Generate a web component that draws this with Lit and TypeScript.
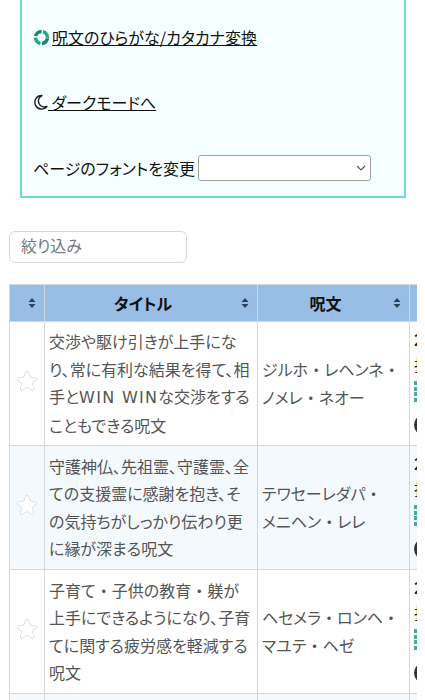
import { LitElement, html, css } from "lit";
import { customElement } from "lit/decorators.js";

const rows = [
  { title: "交渉や駆け引きが上手になり、常に有利な結果を得て、相手とWIN WINな交渉をすることもできる呪文", spell: "ジルホ・レヘンネ・ノメレ・ネオー" },
  { title: "守護神仏、先祖霊、守護霊、全ての支援霊に感謝を抱き、その気持ちがしっかり伝わり更に縁が深まる呪文", spell: "テワセーレダパ・メニヘン・レレ" },
  { title: "子育て・子供の教育・躾が上手にできるようになり、子育てに関する疲労感を軽減する呪文", spell: "ヘセメラ・ロンヘ・マユテ・ヘゼ" },
  { title: "", spell: "" },
];

const sortIcon = html`<svg class="sort" viewBox="0 0 8 10"><path d="M4 0 7.500 4H.5zM4 10 .5 6h7z"></path></svg>`;

const starPath = "M12 3.500l2.700 5.600 6.100.8-4.500 4.200 1.200 6.100-5.500-3-5.500 3 1.200-6.100-4.500-4.200 6.100-.8z";

// middle dots stay full width and latin runs are spaced wider, as in the reference
const cellText = (text: string) =>
  text.split(/(・|WIN WIN)/).map((part) => {
    if (part === "・") return html`<span class="full">・</span>`;
    if (part === "WIN WIN") return html`<span class="latin">WIN WIN</span>`;
    return part;
  });

@customElement("app-root")
export class AppRoot extends LitElement {
  static styles = css`
    :host {
      display: block;
      height: 700px;
      overflow: hidden;
      background: #fff;
      font-family: "Noto Sans CJK JP", "Noto Sans", sans-serif;
      font-size: 16px;
      font-feature-settings: "palt";
      color: #212529;
    }
    .panel {
      margin: -4px 19px 0 20px;
      height: 202px;
      box-sizing: border-box;
      border: 2px solid #70d9d0;
      border-top: 0;
      background: #f5ffff;
      padding: 29px 11px 0;
      color: #111;
      display: flex;
      flex-direction: column;
    }
    .link {
      display: flex;
      align-items: center;
      height: 24px;
      line-height: 24px;
      color: #111;
      text-decoration: underline;
      margin-bottom: 41px;
      white-space: nowrap;
    }
    .link svg {
      flex: none;
    }
    .font-row {
      display: flex;
      align-items: center;
      height: 26px;
      white-space: nowrap;
    }
    .font-select {
      margin-left: 3px;
      width: 173px;
      height: 26px;
      box-sizing: border-box;
      border: 1px solid #a0a0a0;
      border-radius: 3px;
      background: #fff;
      display: flex;
      align-items: center;
      justify-content: flex-end;
      padding-right: 4px;
    }
    .filter {
      display: block;
      margin: 33px 0 0 9px;
      width: 178px;
      height: 32px;
      box-sizing: border-box;
      border: 1px solid #d5d8dc;
      border-radius: 6px;
      background: #fff;
      padding: 0 11px;
      line-height: 27px;
      color: #74797e;
    }
    .wrap {
      margin: 21px 8px 0 9px;
      overflow: hidden;
    }
    table {
      border-collapse: collapse;
      table-layout: fixed;
      width: 560px;
    }
    th,
    td {
      border: 1px solid #d3d8dc;
      padding: 0;
    }
    th {
      background: #98bee6;
      height: 37px;
      box-sizing: border-box;
      padding-right: 16px;
      color: #111;
      font-size: 16px;
      font-weight: 700;
      position: relative;
    }
    .sort {
      position: absolute;
      right: 8px;
      top: 13px;
      width: 8px;
      height: 10px;
      fill: #2c4258;
    }
    td {
      height: 124px;
      box-sizing: border-box;
      color: #555;
      line-height: 27.5px;
      padding: 0 4px;
      text-align: left;
    }
    tr:nth-child(even) td {
      background: #f4f9fd;
    }
    td.spell {
      word-break: keep-all;
    }
    .full {
      font-feature-settings: normal;
    }
    .latin {
      font-family: "DejaVu Sans", sans-serif;
      letter-spacing: 1.300px;
    }
    td.star {
      padding: 0 0 5px;
      text-align: center;
    }
    td.star svg {
      display: block;
      margin: 0 auto;
    }
    .extra {
      display: flex;
      flex-direction: column;
      align-items: flex-start;
      padding-bottom: 4px;
      white-space: nowrap;
      color: #222;
    }
    .extra span {
      height: 25px;
      line-height: 25px;
    }
    .extra .year {
      font-weight: 700;
    }
    .dots {
      display: grid;
      gap: 1.500px;
      margin-top: 4px;
    }
    .dots i {
      width: 4px;
      height: 4px;
      background: #3fae9e;
    }
    .circle {
      width: 22px;
      height: 22px;
      border-radius: 50%;
      background: #333;
      margin-top: 12px;
    }
  `;

  render() {
    return html`
      <div class="panel">
        <a class="link">
          <svg width="17" height="17" viewBox="0 0 17 17" style="margin-right:2px">
            <g fill="none" stroke-width="3.600" transform="rotate(8 8.500 8.500)">
              <circle cx="8.500" cy="8.500" r="6" stroke="#1d8577" stroke-dasharray="7.900 10.950"></circle>
              <circle cx="8.500" cy="8.500" r="6" stroke="#2aa393" stroke-dasharray="7.900 10.950" stroke-dashoffset="-9.420"></circle>
            </g>
          </svg>
          呪文のひらがな/カタカナ変換
        </a>
        <a class="link">
          <svg width="14" height="16" viewBox="0 0 14 16" style="margin-left:1px">
            <path fill="none" stroke="#222" stroke-width="1.400" stroke-linejoin="round" d="M8 1.500A6.800 6.800 0 1 0 13 12.500 6 6 0 0 1 8 1.500Z"></path>
          </svg>
          <span>&nbsp;ダークモードへ</span>
        </a>
        <div class="font-row">
          ページのフォントを変更
          <div class="font-select">
            <svg width="10" height="6" viewBox="0 0 10 6"><path d="M1 1l4 4 4-4" fill="none" stroke="#555" stroke-width="1.100"></path></svg>
          </div>
        </div>
      </div>
      <div class="filter">絞り込み</div>
      <div class="wrap">
        <table>
          <colgroup>
            <col style="width:35px" />
            <col style="width:213px" />
            <col style="width:152px" />
            <col style="width:160px" />
          </colgroup>
          <thead>
            <tr>
              <th>${sortIcon}</th>
              <th>タイトル${sortIcon}</th>
              <th>呪文${sortIcon}</th>
              <th></th>
            </tr>
          </thead>
          <tbody>
            ${rows.map(
              (r) => html`
                <tr>
                  <td class="star">
                    <svg width="24" height="24" viewBox="0 0 24 24">
                      <path d="${starPath}" fill="none" stroke="#d4d6d8" stroke-width="3" stroke-linejoin="round"></path>
                      <path d="${starPath}" fill="#fff" stroke="#fff" stroke-width="1.600" stroke-linejoin="round"></path>
                    </svg>
                  </td>
                  <td>${cellText(r.title)}</td>
                  <td class="spell">${cellText(r.spell)}</td>
                  <td>
                    <div class="extra">
                      <span class="year">2023</span>
                      <span>担当</span>
                      <div class="dots"><i></i><i></i><i></i><i></i></div>
                      <div class="circle"></div>
                    </div>
                  </td>
                </tr>
              `
            )}
          </tbody>
        </table>
      </div>
    `;
  }
}
